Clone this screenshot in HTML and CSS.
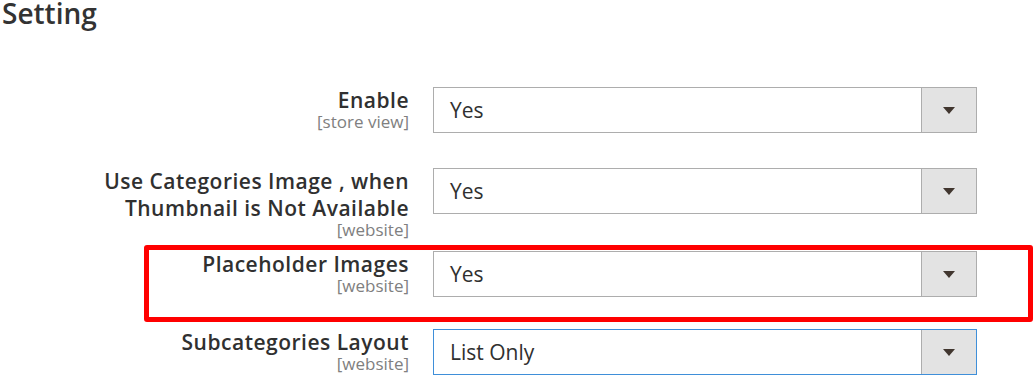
FILE: index.html
```html
<!DOCTYPE html>
<html lang="en">
<head>
<meta charset="utf-8">
<title>Setting</title>
<link rel="stylesheet" href="styles.css">
</head>
<body>
<div class="page">
  <h2 class="title">Setting</h2>
  <div class="fields">
    <div class="field">
      <div class="label">
        <span class="label-text">Enable</span>
        <span class="scope">[store view]</span>
      </div>
      <div class="select">
        <span class="value">Yes</span>
        <span class="btn"><span class="arrow"></span></span>
      </div>
    </div>
    <div class="field field--wrap">
      <div class="label">
        <span class="label-text">Use Categories Image , when Thumbnail is Not Available</span>
        <span class="scope">[website]</span>
      </div>
      <div class="select">
        <span class="value">Yes</span>
        <span class="btn"><span class="arrow"></span></span>
      </div>
    </div>
    <div class="field field--marked">
      <div class="label">
        <span class="label-text">Placeholder Images</span>
        <span class="scope">[website]</span>
      </div>
      <div class="select">
        <span class="value">Yes</span>
        <span class="btn"><span class="arrow"></span></span>
      </div>
      <div class="highlight"></div>
    </div>
    <div class="field">
      <div class="label">
        <span class="label-text">Subcategories Layout</span>
        <span class="scope">[website]</span>
      </div>
      <div class="select select--focus">
        <span class="value">List Only</span>
        <span class="btn"><span class="arrow"></span></span>
      </div>
    </div>
  </div>
</div>
</body>
</html>
```

FILE: styles.css
```css
html, body {
  margin: 0;
  padding: 0;
  background: #ffffff;
  overflow: hidden;
}

body {
  font-family: "Open Sans", "Liberation Sans", sans-serif;
  color: #303030;
}

.page {
  width: 1036px;
  height: 378px;
  position: relative;
  overflow: hidden;
}

.title {
  margin: 0;
  padding-left: 2px;
  font-size: 28px;
  line-height: 26px;
  font-weight: 600;
  color: #333333;
}

.fields {
  margin-top: 61px;
  display: flex;
  flex-direction: column;
}

.field {
  position: relative;
  display: flex;
  align-items: flex-start;
  margin-bottom: 35px;
}

.field--wrap {
  margin-bottom: 13px;
}

.field--marked {
  margin-bottom: 32px;
}

.field:last-child {
  margin-bottom: 0;
}

.label {
  width: 320px;
  margin-left: 89px;
  display: flex;
  flex-direction: column;
  align-items: flex-end;
  text-align: right;
}

.label-text {
  font-size: 21px;
  line-height: 27px;
  font-weight: 600;
  letter-spacing: 0.5px;
  color: #303030;
}

.scope {
  font-size: 17px;
  line-height: 16px;
  color: #808080;
}

.select {
  margin-left: 24px;
  width: 544px;
  height: 46px;
  box-sizing: border-box;
  border: 1px solid #adadad;
  display: flex;
  align-items: stretch;
  background: #ffffff;
}

.select--focus {
  border-color: #3f8fd9;
}

.value {
  flex: 1;
  padding-left: 16px;
  font-size: 21px;
  line-height: 44px;
  color: #303030;
}

.btn {
  width: 54px;
  border-left: 1px solid #adadad;
  background: #e3e3e3;
  display: flex;
  align-items: center;
  justify-content: center;
}

.arrow {
  width: 0;
  height: 0;
  border-left: 6px solid transparent;
  border-right: 6px solid transparent;
  border-top: 7px solid #41362f;
  margin-top: 1px;
}

.highlight {
  position: absolute;
  left: 144px;
  top: -6px;
  width: 889px;
  height: 77px;
  box-sizing: border-box;
  border: 5px solid #ff0000;
  border-radius: 3px;
  pointer-events: none;
}
```
